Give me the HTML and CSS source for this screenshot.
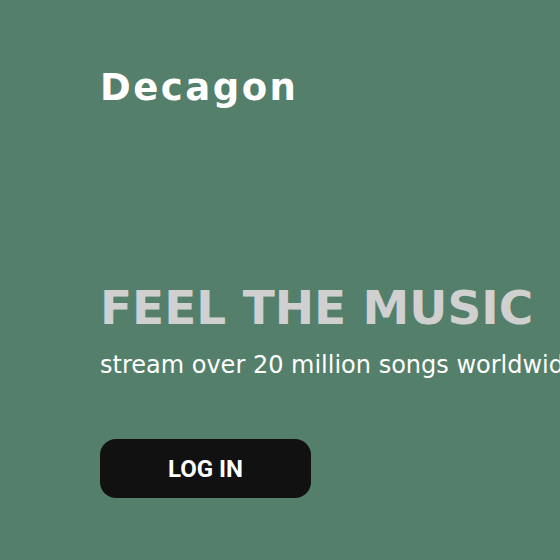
FILE: index.html
```html
<!DOCTYPE html>
<html>
<head>
<meta charset="utf-8">
<link rel="stylesheet" href="styles.css">
</head>
<body>
<div class="page">
  <header class="logo">Decagon</header>
  <main class="hero">
    <h1 class="title">FEEL THE MUSIC</h1>
    <p class="sub">stream over 20 million songs worldwide</p>
    <button class="login">LOG IN</button>
  </main>
</div>
</body>
</html>
```
FILE: styles.css
```css
html, body {
  margin: 0;
  padding: 0;
  background: #547f6a;
  overflow: hidden;
  height: 100%;
}
.page {
  padding: 66px 0 0 100px;
  font-family: "DejaVu Sans", sans-serif;
  white-space: nowrap;
}
.logo {
  color: #fff;
  font-weight: 700;
  font-size: 37px;
  line-height: 44px;
  letter-spacing: 2.5px;
}
.hero {
  margin-top: 170px;
}
.title {
  margin: 0;
  color: #d0d0d0;
  font-size: 47px;
  font-weight: 700;
  line-height: 56px;
}
.sub {
  margin: 14px 0 0;
  color: #fff;
  font-size: 24px;
  line-height: 30px;
}
.login {
  display: block;
  margin-top: 59px;
  width: 211px;
  height: 59px;
  border: none;
  border-radius: 16px;
  background: #111;
  color: #fff;
  font-family: Roboto, sans-serif;
  font-weight: 700;
  font-size: 24px;
  padding: 0;
}
```
